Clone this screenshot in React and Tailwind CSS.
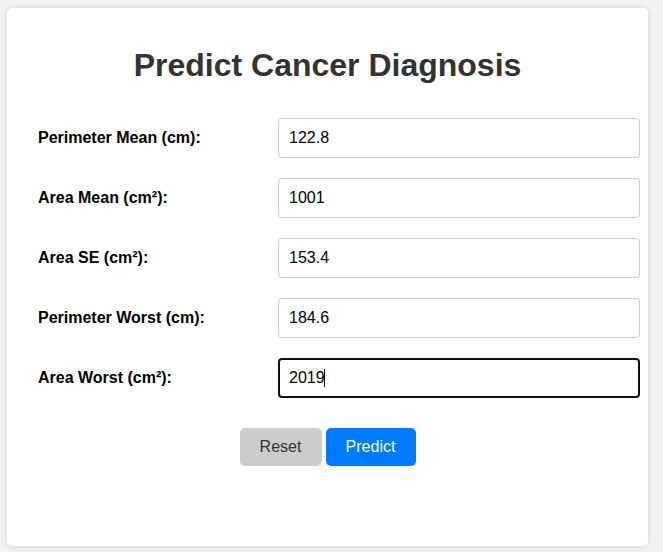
import { useState } from "react"

const fields = [
    { id: "perimeter_mean", label: "Perimeter Mean (cm):", value: "122.8" },
    { id: "area_mean", label: "Area Mean (cm²):", value: "1001" },
    { id: "area_se", label: "Area SE (cm²):", value: "153.4" },
    { id: "perimeter_worst", label: "Perimeter Worst (cm):", value: "184.6" },
    { id: "area_worst", label: "Area Worst (cm²):", value: "2019" },
]

export default function App() {
    const [values, setValues] = useState(
        Object.fromEntries(fields.map((f) => [f.id, f.value]))
    )

    const reset = () =>
        setValues(Object.fromEntries(fields.map((f) => [f.id, ""])))

    return (
        <div className="min-h-[552px] bg-[#f2f2f2] pl-[7px] pt-[8px] font-['Liberation_Sans',Arial,sans-serif]">
            <div className="h-[538px] w-[641px] rounded-[5px] bg-white pt-[39px] shadow-[0_0_6px_rgba(0,0,0,0.12)]">
                <h1 className="mb-[34px] text-center text-[32px] leading-[37px] font-bold text-[#333]">
                    Predict Cancer Diagnosis
                </h1>

                <form className="flex flex-col gap-[20px] pl-[31px] pr-[8px]">
                    {fields.map((f, i) => {
                        // el último campo aparece enfocado en la captura
                        const focused = i === fields.length - 1
                        return (
                            <div key={f.id} className="flex items-center">
                                <label
                                    htmlFor={f.id}
                                    className="w-[240px] shrink-0 text-[16px] font-bold text-black"
                                >
                                    {f.label}
                                </label>
                                <div className="relative flex-1">
                                    <input
                                        id={f.id}
                                        type="text"
                                        value={values[f.id]}
                                        onChange={(e) =>
                                            setValues({ ...values, [f.id]: e.target.value })
                                        }
                                        className={
                                            focused
                                                ? "h-[40px] w-full rounded-[4px] border-2 border-[#101010] px-[9px] text-[16px] text-black caret-transparent outline-none"
                                                : "h-[40px] w-full rounded-[4px] border border-[#ccc] px-[10px] text-[16px] text-black outline-none"
                                        }
                                    />
                                    {focused && (
                                        <span className="pointer-events-none absolute top-[11px] left-[46px] h-[18px] w-px bg-black" />
                                    )}
                                </div>
                            </div>
                        )
                    })}

                    <div className="mt-[10px] flex justify-center gap-[4px] pr-[23px]">
                        <button
                            type="button"
                            onClick={reset}
                            className="h-[38px] w-[82px] rounded-[5px] bg-[#ccc] text-[16px] text-[#333]"
                        >
                            Reset
                        </button>
                        <button
                            type="button"
                            className="h-[38px] w-[90px] rounded-[5px] bg-[#007bff] text-[16px] text-white"
                        >
                            Predict
                        </button>
                    </div>
                </form>
            </div>
        </div>
    )
}
